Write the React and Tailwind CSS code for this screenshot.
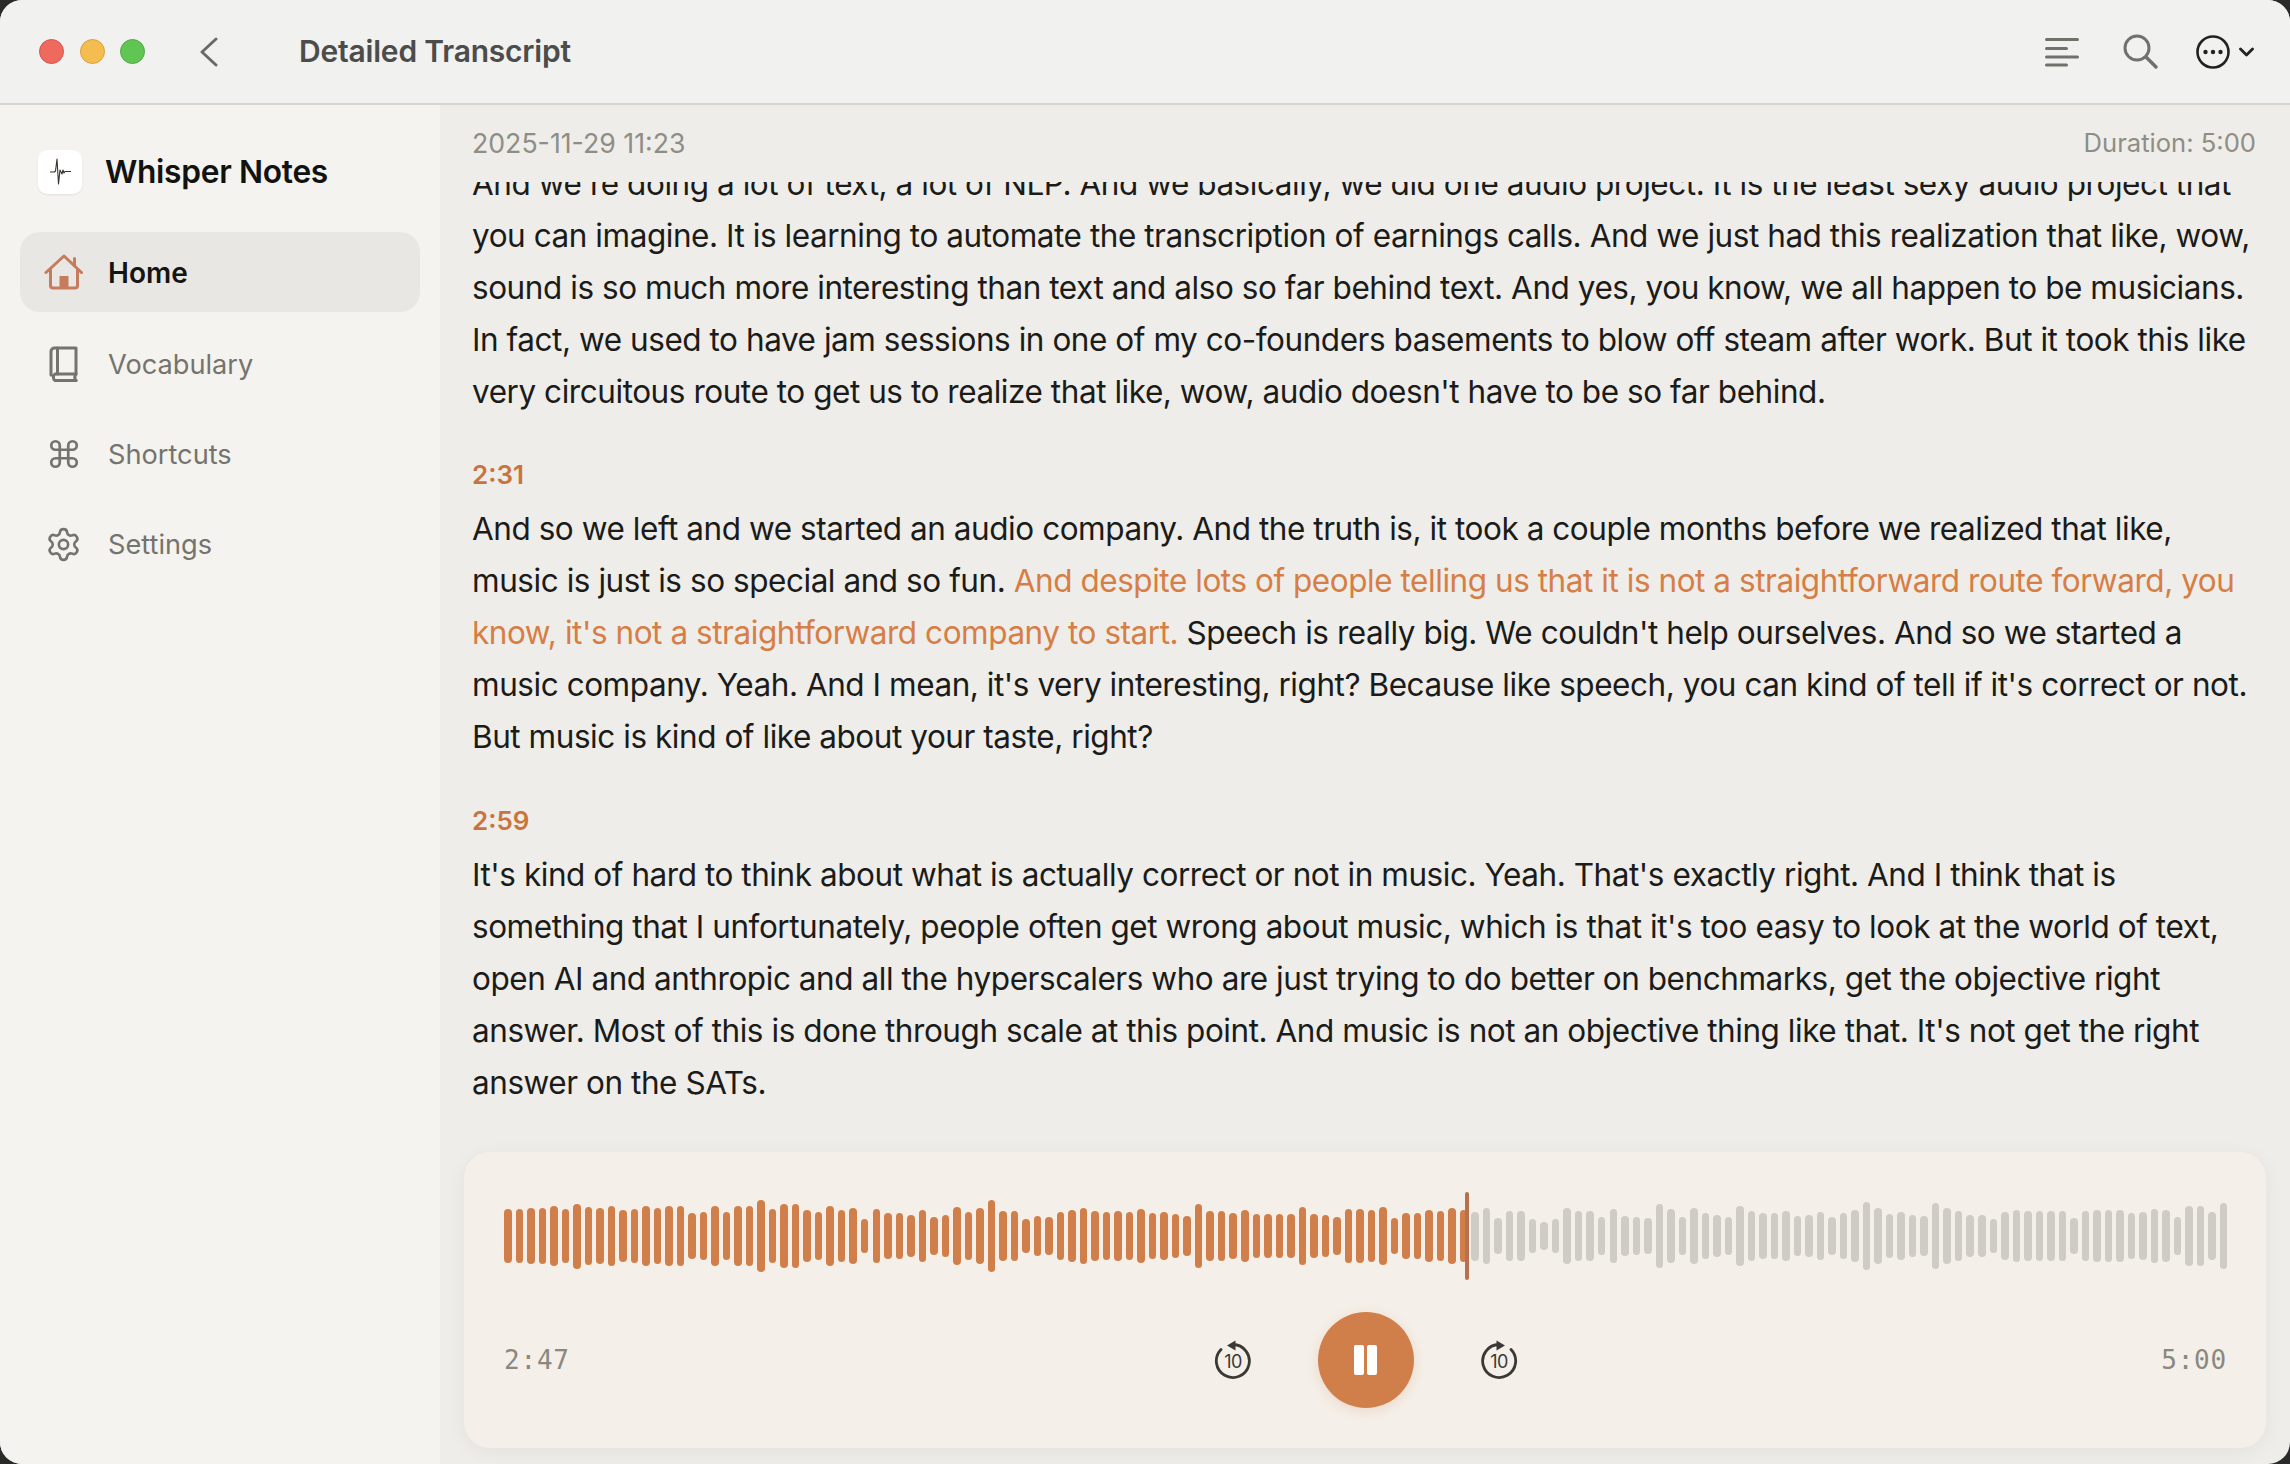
import React from 'react';
import { Command, Settings } from 'lucide-react';

const FONT = "font-['Inter','Noto_Sans',sans-serif]";

// bar heights read off the recording, px
const BARS = [
  54, 54, 56, 56, 60, 54, 65, 58, 56, 60, 52, 54, 60, 56, 60, 60, 46, 48, 60, 48, 60, 60, 72, 54, 64, 64, 52, 48, 60, 52,
  56, 34, 54, 46, 46, 42, 52, 38, 42, 58, 48, 56, 72, 50, 50, 34, 40, 38, 48, 52, 56, 50, 48, 50, 48, 54, 46, 48, 44, 40,
  64, 50, 50, 46, 52, 44, 44, 44, 44, 58, 44, 42, 38, 54, 54, 52, 58, 36, 46, 46, 52, 50, 56, 52, 49, 56, 36, 50, 50, 34,
  28, 34, 56, 50, 50, 38, 54, 40, 38, 36, 64, 54, 38, 56, 46, 42, 38, 60, 50, 46, 46, 50, 40, 42, 48, 38, 46, 52, 68, 56,
  44, 48, 42, 40, 66, 56, 50, 42, 42, 34, 48, 52, 50, 50, 50, 50, 36, 50, 52, 52, 52, 46, 48, 54, 52, 38, 60, 60, 48, 66,
];
const PLAYED = 84;

const Line = ({ children }) => <div className="whitespace-nowrap">{children}</div>;

const HomeIcon = () => (
  <svg width="40" height="36" viewBox="0 0 40 36" fill="none" stroke="#c67b5c" strokeWidth="3" strokeLinecap="round" strokeLinejoin="round">
    <path d="M2 18.500 20 2l17.500 16.500" />
    <path d="M30.500 4.500v7" />
    <path d="M6.500 16v15.500a2.500 2.500 0 0 0 2.500 2.500h22a2.500 2.500 0 0 0 2.500-2.500V16" />
    <rect x="15.500" y="22" width="9" height="12" fill="#c67b5c" stroke="none" />
  </svg>
);

const BookIcon = () => (
  <svg width="30" height="36" viewBox="0 0 30 36" fill="none" stroke="#74736e" strokeWidth="3" strokeLinecap="round" strokeLinejoin="round">
    <path d="M2 29V5.500A3.500 3.500 0 0 1 5.500 2H27v26H6a4 4 0 0 0 0 6.500h21" />
    <path d="M8.500 2v26" />
    <path d="M27 28c-1.500 2-1.500 4.500 0 6.500" />
  </svg>
);

const NavItem = ({ icon, label, active }) => (
  <div className={`flex items-center rounded-[20px] ${active ? 'h-[80px] bg-[#e8e7e3]' : 'h-[90px]'}`}>
    <div className="flex w-[88px] shrink-0 justify-center pr-[1px]">{icon}</div>
    <span className={`pt-[2px] ${active ? 'text-[28px] font-semibold text-[#141413]' : 'text-[27.200px] text-[#74736e]'}`}>{label}</span>
  </div>
);

const SkipIcon = ({ forward }) => (
  <svg className="-mt-[4px]" width="40" height="42" viewBox="0 0 40 42" fill="none">
    {forward ? (
      <>
        <path d="M20 7.500a16.500 16.500 0 1 0 12 5" stroke="#3a3934" strokeWidth="2.800" strokeLinecap="round" />
        <path d="M26 8.500 17.500 3.500v10z" fill="#3a3934" />
      </>
    ) : (
      <>
        <path d="M20 7.500a16.500 16.500 0 1 1-12 5" stroke="#3a3934" strokeWidth="2.800" strokeLinecap="round" />
        <path d="M14 8.500 22.500 3.500v10z" fill="#3a3934" />
      </>
    )}
    <text x="20" y="31" textAnchor="middle" fontSize="18" letterSpacing="-0.5" fontFamily="Inter, sans-serif" fill="#3a3934">10</text>
  </svg>
);

export default function App() {
  return (
    <div className={`h-[1464px] w-[2290px] overflow-hidden bg-[#2a2a2a] ${FONT}`}>
      <div className="flex h-full flex-col overflow-hidden rounded-[22px] bg-[#eeede9]">
        {/* title bar */}
        <header className="flex h-[105px] shrink-0 items-center border-b-2 border-[#d6d5d1] bg-[#f1f1ef]">
          <div className="ml-[39px] flex gap-[15.500px]">
            <span className="h-[25px] w-[25px] rounded-full border border-[#d9534a] bg-[#ee6a5f]" />
            <span className="h-[25px] w-[25px] rounded-full border border-[#dba03a] bg-[#f5bd4f]" />
            <span className="h-[25px] w-[25px] rounded-full border border-[#4fa845] bg-[#61c554]" />
          </div>
          <svg className="ml-[54px]" width="20" height="30" viewBox="0 0 20 30" fill="none" stroke="#6a6a68" strokeWidth="3" strokeLinecap="round" strokeLinejoin="round">
            <path d="M17 2 3 15l14 13" />
          </svg>
          <h1 className="ml-[80px] text-[30px] font-semibold tracking-[-0.2px] text-[#4c4c4a]">Detailed Transcript</h1>
          <div className="ml-auto mr-[36px] flex items-center">
            <svg width="34" height="30" viewBox="0 0 34 30" stroke="#71706b" strokeWidth="3" strokeLinecap="round">
              <path d="M1.500 2.500h31M1.500 11.500h20M1.500 20h31M1.500 28h20" />
            </svg>
            <svg className="ml-[44px]" width="36" height="36" viewBox="0 0 36 36" fill="none" stroke="#71706b" strokeWidth="3" strokeLinecap="round">
              <circle cx="14" cy="14" r="12" />
              <path d="M23 23l10 10" strokeWidth="3.500" />
            </svg>
            <svg className="ml-[36px]" width="36" height="36" viewBox="0 0 36 36" fill="#222220" stroke="none">
              <circle cx="18" cy="18" r="15.500" fill="none" stroke="#222220" strokeWidth="2.600" />
              <circle cx="10.500" cy="18" r="2.200" />
              <circle cx="18" cy="18" r="2.200" />
              <circle cx="25.500" cy="18" r="2.200" />
            </svg>
            <svg className="ml-[8px]" width="15" height="10" viewBox="0 0 15 10" fill="none" stroke="#222220" strokeWidth="2.800" strokeLinecap="round" strokeLinejoin="round">
              <path d="M1.500 2 7.500 8 13.500 2" />
            </svg>
          </div>
        </header>

        <div className="flex min-h-0 flex-1">
          {/* sidebar */}
          <aside className="w-[440px] shrink-0 bg-[#f4f3ef] px-[20px]">
            <div className="ml-[18px] mt-[45px] flex h-[44px] items-center">
              <div className="flex h-[44px] w-[44px] items-center justify-center rounded-[9px] bg-white shadow-[0_1px_2px_rgba(0,0,0,0.08)]">
                <svg width="44" height="44" viewBox="0 0 44 44" fill="none" stroke="#33332f" strokeWidth="1.100" strokeLinejoin="round">
                  <path d="M12 22h4.500l1-1L19 9l1.500 25L22 20l2 4 1-4 1 3 1-1.500h6" />
                </svg>
              </div>
              <span className="ml-[23px] text-[31.700px] font-semibold tracking-[-0.3px] text-[#121211]">Whisper Notes</span>
            </div>
            <nav className="mt-[38px]">
              <NavItem active label="Home" icon={<HomeIcon />} />
              <div className="mt-[7px]">
                <NavItem label="Vocabulary" icon={<BookIcon />} />
                <NavItem label="Shortcuts" icon={<Command size={34} strokeWidth={1.900} color="#74736e" />} />
                <NavItem label="Settings" icon={<Settings size={37} strokeWidth={1.700} color="#74736e" />} />
              </div>
            </nav>
          </aside>

          {/* transcript */}
          <main className="flex min-w-0 flex-1 flex-col">
            <div className="flex h-[77px] shrink-0 items-center justify-between pl-[32px] pr-[34px] text-[#8f8d86]">
              <span className="text-[26.700px]">2025-11-29 11:23</span>
              <span className="text-[25.600px]">Duration: 5:00</span>
            </div>
            <div className="min-h-0 flex-1 overflow-hidden pl-[32px] text-[31.500px] leading-[52px] tracking-[-0.45px] text-[#1b1b19]">
              <div className="-mt-[24px]">
                <Line>And we're doing a lot of text, a lot of NLP. And we basically, we did one audio project. It is the least sexy audio project that</Line>
                <Line>you can imagine. It is learning to automate the transcription of earnings calls. And we just had this realization that like, wow,</Line>
                <Line>sound is so much more interesting than text and also so far behind text. And yes, you know, we all happen to be musicians.</Line>
                <Line>In fact, we used to have jam sessions in one of my co-founders basements to blow off steam after work. But it took this like</Line>
                <Line>very circuitous route to get us to realize that like, wow, audio doesn't have to be so far behind.</Line>

                <div className="mb-[10px] mt-[39px] h-[36px] text-[26px] font-semibold leading-[36px] tracking-normal text-[#c9743f]">2:31</div>
                <Line>And so we left and we started an audio company. And the truth is, it took a couple months before we realized that like,</Line>
                <Line>music is just is so special and so fun. <span className="text-[#d67e45]">And despite lots of people telling us that it is not a straightforward route forward, you</span></Line>
                <Line><span className="text-[#d67e45]">know, it's not a straightforward company to start.</span> Speech is really big. We couldn't help ourselves. And so we started a</Line>
                <Line>music company. Yeah. And I mean, it's very interesting, right? Because like speech, you can kind of tell if it's correct or not.</Line>
                <Line>But music is kind of like about your taste, right?</Line>

                <div className="mb-[10px] mt-[40px] h-[36px] text-[26px] font-semibold leading-[36px] tracking-normal text-[#c9743f]">2:59</div>
                <Line>It's kind of hard to think about what is actually correct or not in music. Yeah. That's exactly right. And I think that is</Line>
                <Line>something that I unfortunately, people often get wrong about music, which is that it's too easy to look at the world of text,</Line>
                <Line>open AI and anthropic and all the hyperscalers who are just trying to do better on benchmarks, get the objective right</Line>
                <Line>answer. Most of this is done through scale at this point. And music is not an objective thing like that. It's not get the right</Line>
                <Line>answer on the SATs.</Line>
              </div>
            </div>

            {/* player */}
            <section className="mx-[24px] mb-[16px] mt-[4px] h-[296px] shrink-0 rounded-[26px] bg-[#f4efe8] pl-[40px] pr-[38px] pt-[40px] shadow-[0_4px_20px_rgba(0,0,0,0.05)]">
              <div className="relative flex h-[88px] items-center justify-between">
                {BARS.map((h, i) => (
                  <div
                    key={i}
                    className={`w-[7.500px] rounded-full ${i < PLAYED ? 'bg-[#d17f4a]' : 'bg-[#cfccc5]'}`}
                    style={{ height: h }}
                  />
                ))}
                <div className="absolute left-[961px] top-0 h-[88px] w-[4px] rounded-full bg-[#b8714f]" />
              </div>
              <div className="mt-[32px] grid h-[96px] grid-cols-[1fr_auto_1fr] items-center">
                <span className="font-['DejaVu_Sans_Mono',monospace] text-[26px] tracking-[0.8px] text-[#8a8880]">2:47</span>
                <div className="-ml-[1px] flex items-center gap-[65px]">
                  <SkipIcon />
                  <div className="flex h-[96px] w-[96px] items-center justify-center gap-[3px] rounded-full bg-[#d17f4a] shadow-[0_3px_12px_rgba(209,127,74,0.2)]">
                    <span className="h-[30px] w-[10px] rounded-[2px] bg-white" />
                    <span className="h-[30px] w-[10px] rounded-[2px] bg-white" />
                  </div>
                  <SkipIcon forward />
                </div>
                <span className="mr-[1px] text-right font-['DejaVu_Sans_Mono',monospace] text-[26px] tracking-[0.8px] text-[#8a8880]">5:00</span>
              </div>
            </section>
          </main>
        </div>
      </div>
    </div>
  );
}
